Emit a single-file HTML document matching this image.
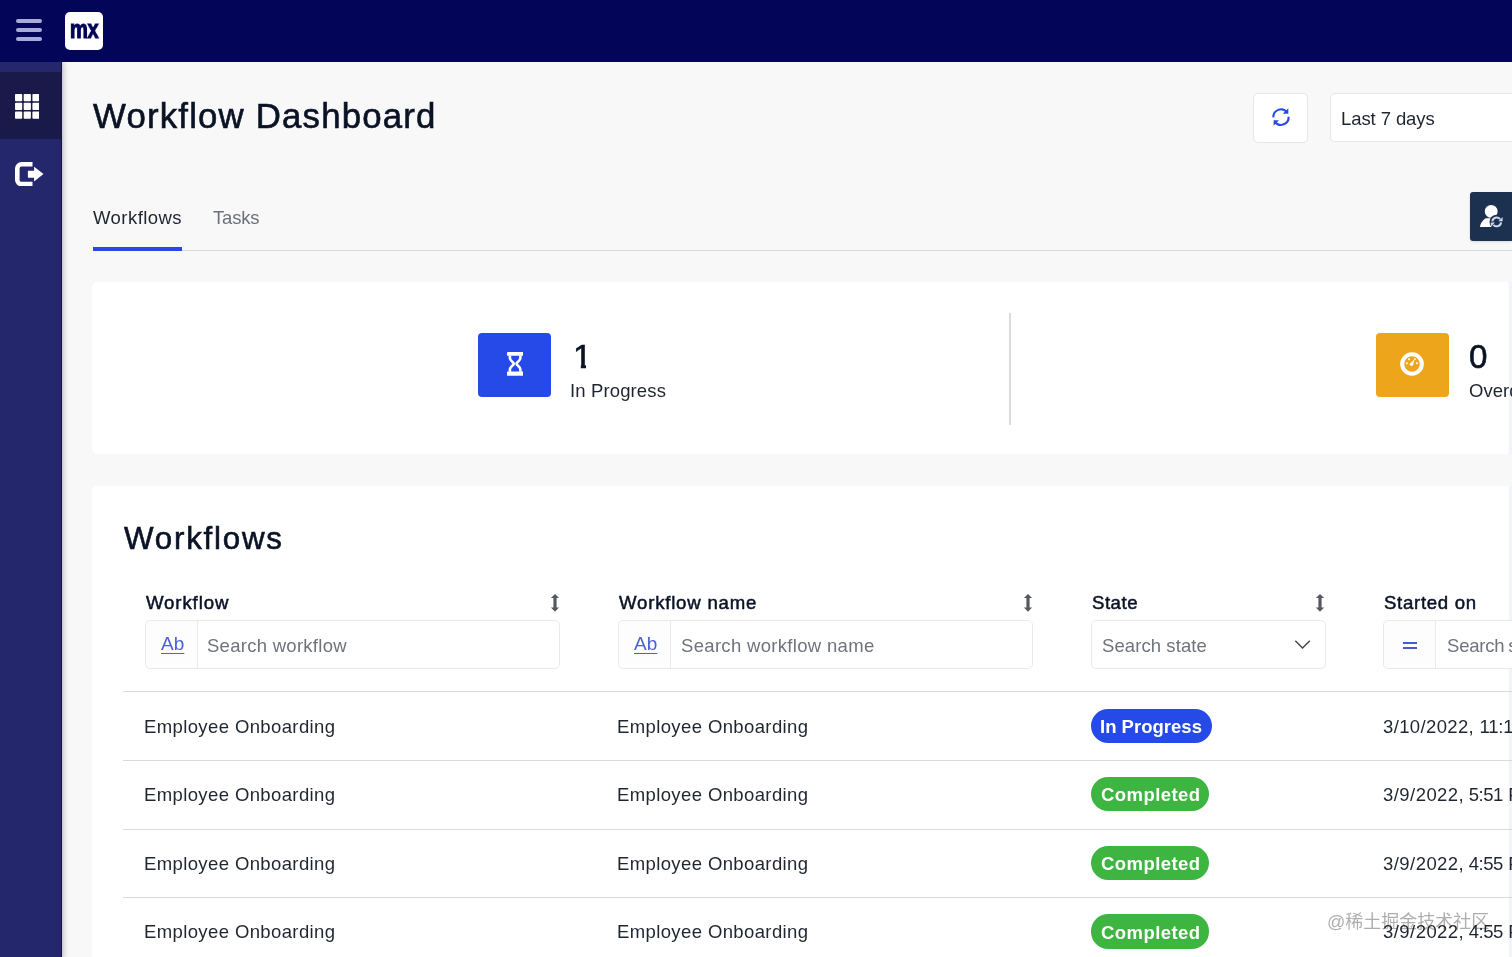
<!DOCTYPE html>
<html lang="en">
<head>
<meta charset="utf-8">
<title>Workflow Dashboard</title>
<style>
*{box-sizing:border-box;margin:0;padding:0}
html,body{width:1512px;height:957px;overflow:hidden;background:#f8f8f8;font-family:"Liberation Sans","Noto Sans CJK SC",sans-serif;color:#0a1325}
body{position:relative}
.t{position:absolute;white-space:nowrap;line-height:1;will-change:transform}
#topbar{position:absolute;left:0;top:0;width:1512px;height:61.8px;background:#030559;z-index:2}
#side{position:absolute;left:0;top:61.8px;width:61.5px;height:896px;background:#24276c;box-shadow:1px 0 6px rgba(0,0,0,.3);border-right:.9px solid #14143f}
#side .active{position:absolute;left:0;top:10.5px;width:60.6px;height:66.9px;background:#19194a}
.bar{position:absolute;left:16.1px;width:26px;height:4.2px;border-radius:2.1px;background:#a8aad8}
#logo{position:absolute;left:65px;top:12px;width:38px;height:38px;border-radius:5px;background:#fff}
#logo span{will-change:transform;position:absolute;left:-6.5px;top:0;width:50px;text-align:center;font-weight:bold;color:#030559;font-size:26.6px;line-height:34px;letter-spacing:-.6px;transform:scaleX(.76);-webkit-text-stroke:1.1px #030559}
h1{left:93px;top:94px;font-size:34.8px;font-weight:normal;letter-spacing:1.35px;color:#0a1325;-webkit-text-stroke:.6px #0a1325}
.btn{position:absolute;background:#fff;border:1px solid #e7e7e9;border-radius:5px}
#tabline{position:absolute;left:93px;top:249.8px;width:1419px;height:1.2px;background:#d9d9da}
#tabsel{position:absolute;left:93px;top:247px;width:88.5px;height:4px;background:#264ae8}
.tab{font-size:18.5px;letter-spacing:.45px}
#fab{position:absolute;left:1470px;top:192px;width:42px;height:49px;background:#1c304f;border-radius:3px 0 0 3px;box-shadow:0 1px 3px rgba(0,0,0,.12)}
.card{position:absolute;left:92px;width:1425px;background:#fff;border-radius:5px}
.sq{position:absolute;top:333.3px;width:72.5px;height:63.8px;border-radius:4px}
.num{font-size:33.2px;letter-spacing:0;color:#0a1325;-webkit-text-stroke:.6px #0a1325}
.lbl{font-size:18.5px;letter-spacing:.45px;color:#1e2530}
#vdiv{position:absolute;left:1009.2px;top:313px;width:1.6px;height:112px;background:#dcdcde}
h2{left:124px;font-size:31.3px;font-weight:normal;letter-spacing:1px;-webkit-text-stroke:.6px #0a1325}
.th{font-size:18.6px;font-weight:normal;letter-spacing:.2px;color:#0a1325;-webkit-text-stroke:.5px #0a1325}
.inp{position:absolute;top:620.4px;height:49px;background:#fff;border:1px solid #e9eaed;border-radius:5px}
.inp .pre{position:absolute;left:0;top:0;bottom:0;width:52px;border-right:1px solid #e9eaec;background:#fdfdfe;border-radius:5px 0 0 5px}
.ab{font-size:19px;color:#4a60dc;text-decoration:underline;text-decoration-thickness:1px;text-underline-offset:2.5px;letter-spacing:.2px}
.ph{font-size:18.5px;color:#6f747c;letter-spacing:.5px}
.hl{position:absolute;left:123.2px;width:1388.8px;height:1.3px;background:#dadadc}
.cell{font-size:18.5px;color:#1f2630;letter-spacing:.52px}
.badge{position:absolute;left:1090.5px;height:34.3px;border-radius:17.2px;color:#fff;font-weight:bold;font-size:18.5px}
.badge span{will-change:transform;position:absolute;left:11px;top:8px;line-height:1;white-space:nowrap;letter-spacing:.05px}
.c1{left:144px;letter-spacing:.386px}.c2{left:617.4px;letter-spacing:.386px}.cd0{left:1382.78px;letter-spacing:.367px}.cd{left:1382.78px;letter-spacing:.447px}
.sort{position:absolute;top:593.6px;width:10px;height:18px}
.tm{margin-left:-.2px;letter-spacing:-.45px}.ap{margin-left:-.3px}
.wm{font-size:18px;color:rgba(120,120,120,.6);letter-spacing:0}
</style>
</head>
<body>
<div id="topbar">
  <div class="bar" style="top:19px"></div>
  <div class="bar" style="top:28.2px"></div>
  <div class="bar" style="top:37.2px"></div>
  <div id="logo"><span id="mx">mx</span></div>
</div>
<div id="side"><div class="active"></div>
<svg style="position:absolute;left:14.6px;top:32.7px" width="24.6" height="24.8" viewBox="0 0 24.6 24.8"><g fill="#fff">
<rect x="0" y="0" width="7.2" height="7.2" rx=".8"/><rect x="8.7" y="0" width="7.2" height="7.2" rx=".8"/><rect x="17.4" y="0" width="7.2" height="7.2" rx=".8"/>
<rect x="0" y="8.8" width="7.2" height="7.2" rx=".8"/><rect x="8.7" y="8.8" width="7.2" height="7.2" rx=".8"/><rect x="17.4" y="8.8" width="7.2" height="7.2" rx=".8"/>
<rect x="0" y="17.6" width="7.2" height="7.2" rx=".8"/><rect x="8.7" y="17.6" width="7.2" height="7.2" rx=".8"/><rect x="17.4" y="17.6" width="7.2" height="7.2" rx=".8"/></g></svg>
<svg style="position:absolute;left:14.6px;top:99.8px" width="29" height="24.4" viewBox="0 0 29 24.4">
<path d="M17.5 2.3H6.5a4.2 4.2 0 0 0-4.2 4.2v11.4a4.2 4.2 0 0 0 4.2 4.2H17.5" fill="none" stroke="#fff" stroke-width="4.6"/>
<path d="M12.9 8.7h6.2v-3.9l9.4 7.3-9.4 7.3v-3.7h-6.2z" fill="#fff"/></svg>
</div>

<h1 class="t" id="h1" style="left:93.27px;top:98.50px;letter-spacing:1.185px">Workflow Dashboard</h1>

<div class="btn" style="left:1252.5px;top:93px;width:55.5px;height:49.5px"></div>
<div class="btn" style="left:1329.5px;top:93px;width:200px;height:48.7px"></div>
<div id="last7" class="t lbl" style="left:1340.87px;top:109.80px;letter-spacing:-0.092px;color:#1e2530">Last 7 days</div>

<div id="tab1" class="t tab" style="left:92.98px;top:209.25px;letter-spacing:0.455px;color:#1e2530">Workflows</div>
<div id="tab2" class="t tab" style="left:212.51px;top:209.25px;letter-spacing:-0.168px;color:#6c717e">Tasks</div>
<div id="tabline"></div><div id="tabsel"></div>
<div id="fab"></div>

<div class="card" style="top:282px;height:172.3px"></div>
<div style="position:absolute;left:1507.5px;top:282px;width:4.5px;height:172.3px;background:linear-gradient(to right,#fff,#f3f4f7 40%)"></div>
<div class="sq" style="left:478.2px;background:#264ae8"></div>
<div id="n1" class="t num" style="left:572.6px;top:338.6px;letter-spacing:0;font-size:34px;clip-path:polygon(0 0,100% 0,100% 25.5px,13px 25.5px,13px 100%,7.8px 100%,7.8px 25.5px,0 25.5px)">1</div>
<div id="l1" class="t lbl" style="left:570.49px;top:381.90px;letter-spacing:0.128px">In Progress</div>
<div id="vdiv"></div>
<div class="sq" style="left:1376px;background:#eda61c"></div>
<div id="n0" class="t num" style="left:1468.6px;top:339.5px;letter-spacing:0.000px">0</div>
<div class="t lbl" style="left:1468.5px;top:381.9px;letter-spacing:.04px">Overdue</div>

<div class="card" style="top:485.6px;height:500px"></div>
<div style="position:absolute;left:1507.5px;top:485.6px;width:4.5px;height:472px;background:linear-gradient(to right,#fff,#f3f4f7 40%)"></div>
<h2 id="h2" class="t" style="left:124.20px;top:523.00px;letter-spacing:1.777px">Workflows</h2>

<div id="th1" class="t th" style="left:145.88px;top:594.00px;letter-spacing:0.886px">Workflow</div>
<div id="th2" class="t th" style="left:619.07px;top:594.00px;letter-spacing:0.793px">Workflow name</div>
<div id="th3" class="t th" style="left:1091.69px;top:594.00px;letter-spacing:0.521px">State</div>
<div id="th4" class="t th" style="left:1383.69px;top:594.00px;letter-spacing:0.696px">Started on</div>

<div class="inp" style="left:144.7px;width:415.3px"><div class="pre"></div></div>
<div class="inp" style="left:617.8px;width:415.3px"><div class="pre"></div></div>
<div class="inp" style="left:1090.9px;width:234.7px"></div>
<div class="inp" style="left:1383.3px;width:200px"><div class="pre"></div></div>
<div id="ab1" class="t ab" style="left:161.00px;top:634.00px;letter-spacing:0.029px">Ab</div>
<div class="t ab" style="left:634.2px;top:634px;letter-spacing:.029px">Ab</div>
<div id="ph1" class="t ph" style="left:207.45px;top:637px;letter-spacing:0.275px">Search workflow</div>
<div id="ph2" class="t ph" style="left:680.94px;top:637px;letter-spacing:0.321px">Search workflow name</div>
<div id="ph3" class="t ph" style="left:1101.72px;top:637px;letter-spacing:0.081px">Search state</div>
<div class="t ph" style="left:1446.6px;top:637px;letter-spacing:-.2px;word-spacing:-1px">Search started on</div>

<div class="hl" style="top:691px"></div>
<div id="c1" class="t cell c1" style="top:718.2px">Employee Onboarding</div>
<div id="c2" class="t cell c2" style="top:718.2px">Employee Onboarding</div>
<div id="d1" class="t cell cd0" style="top:718.2px"><span id="d1s">3/10/2022,</span><span class="tm" style="margin-left:.3px;letter-spacing:-.15px"> 11:15</span><span class="ap"> AM</span></div>
<div class="badge" style="top:709px;width:121.3px;background:#264ae8"><span id="b1" style="left:9.6px;top:9.4px;letter-spacing:.013px">In Progress</span></div>

<div class="hl" style="top:759.7px"></div>
<div class="t cell c1" style="top:786.3px">Employee Onboarding</div>
<div class="t cell c2" style="top:786.3px">Employee Onboarding</div>
<div id="d2" class="t cell cd" style="top:786.3px"><span id="d2s">3/9/2022,</span><span class="tm"> 5:51</span><span class="ap"> PM</span></div>
<div class="badge" style="top:777.1px;width:118.6px;background:#3db540"><span id="b2" style="left:10.26px;top:9.3px;letter-spacing:.438px">Completed</span></div>

<div class="hl" style="top:828.8px"></div>
<div class="t cell c1" style="top:855.2px">Employee Onboarding</div>
<div class="t cell c2" style="top:855.2px">Employee Onboarding</div>
<div class="t cell cd" style="top:855.2px"><span>3/9/2022,</span><span class="tm"> 4:55</span><span class="ap"> PM</span></div>
<div class="badge" style="top:845.9px;width:118.6px;background:#3db540"><span style="left:10.26px;top:9.3px;letter-spacing:.438px">Completed</span></div>

<div class="hl" style="top:896.9px"></div>
<div class="t wm" style="left:1326.5px;top:913.3px">@稀土掘金技术社区</div>
<div class="t cell c1" style="top:923.3px">Employee Onboarding</div>
<div class="t cell c2" style="top:923.3px">Employee Onboarding</div>
<div class="t cell cd" style="top:923.3px"><span>3/9/2022,</span><span class="tm"> 4:55</span><span class="ap"> PM</span></div>
<div class="badge" style="top:914.3px;width:118.6px;background:#3db540"><span style="left:10.26px;top:9.3px;letter-spacing:.438px">Completed</span></div>


<!-- refresh icon -->
<svg style="position:absolute;left:1268.8px;top:104.9px" width="24" height="24" viewBox="-12 -12 24 24">
<path d="M-7.6 .4A7.6 7.6 0 0 1 5.9 -4.8" fill="none" stroke="#264ae8" stroke-width="2.1"/>
<path d="M7.3 -8.7V-3.2H1.8z" fill="#264ae8"/>
<path d="M7.6 -.2A7.6 7.6 0 0 1 -5.9 5" fill="none" stroke="#264ae8" stroke-width="2.1"/>
<path d="M-7.4 8.85V3.3H-2.1z" fill="#264ae8"/>
</svg>
<!-- fab user icon -->
<svg style="position:absolute;left:1476px;top:200px;z-index:3" width="32" height="32" viewBox="1476 200 32 32">
<circle cx="1491.2" cy="211.4" r="6.4" fill="#fff"/>
<path d="M1479.9 226.9c.5-3 2.3-6.3 5.6-8.6h9.5l3 8.6z" fill="#fff"/>
<circle cx="1496.7" cy="221.9" r="7.2" fill="#1c304f"/>
<path d="M1492.3 221.4a4.4 4.4 0 0 1 7.7-2.4" fill="none" stroke="#cfd8f3" stroke-width="2"/>
<path d="M1501.1 222.4a4.4 4.4 0 0 1-7.7 2.4" fill="none" stroke="#cfd8f3" stroke-width="2"/>
<path d="M1502.6 217.1v4.2h-4.2z" fill="#cfd8f3"/>
<path d="M1490.8 226.7v-4.2h4.2z" fill="#cfd8f3"/>
</svg>
<!-- hourglass -->
<svg style="position:absolute;left:506.8px;top:351.9px" width="16.3" height="23.7" viewBox="0 0 16.3 23.7">
<rect x="0" y="0" width="16.3" height="3.8" rx=".4" fill="#fff"/>
<rect x="0" y="19.5" width="16.3" height="4.2" rx=".4" fill="#fff"/>
<path d="M2.9 3.5V6C2.9 9.2 6.8 9.9 6.8 11.7C6.8 13.5 2.9 14.2 2.9 17.4V19.8" fill="none" stroke="#fff" stroke-width="2.6"/>
<path d="M13.4 3.5V6C13.4 9.2 9.5 9.9 9.5 11.7C9.5 13.5 13.4 14.2 13.4 17.4V19.8" fill="none" stroke="#fff" stroke-width="2.6"/>
</svg>
<!-- gauge -->
<svg style="position:absolute;left:1398.06px;top:349.7px" width="28" height="28" viewBox="-14 -14 28 28">
<circle cx="0" cy="0" r="9.8" fill="none" stroke="#fff" stroke-width="4.05"/>
<circle cx="-3" cy="-4.7" r="1.05" fill="#fff"/><circle cx="-5.1" cy="-.75" r="1.05" fill="#fff"/><circle cx="4.9" cy="-.75" r="1.05" fill="#fff"/>
<circle cx="-.5" cy=".2" r="1.75" fill="#fff"/>
<path d="M-1.6 -.6L3.2 -5.4L.6 1z" fill="#fff"/>
<circle cx="3" cy="-4.9" r=".9" fill="#fff"/>
</svg>
<!-- sort icons -->
<svg class="sort" style="left:549.9px"><path d="M5 0L9.1 4.1H6.6V13.55H9.1L5 17.8L.9 13.55H3.4V4.1H.9z" fill="#565a5f"/></svg>
<svg class="sort" style="left:1023.2px"><path d="M5 0L9.1 4.1H6.6V13.55H9.1L5 17.8L.9 13.55H3.4V4.1H.9z" fill="#565a5f"/></svg>
<svg class="sort" style="left:1315.3px"><path d="M5 0L9.1 4.1H6.6V13.55H9.1L5 17.8L.9 13.55H3.4V4.1H.9z" fill="#565a5f"/></svg>
<!-- chevron -->
<svg style="position:absolute;left:1293px;top:638px" width="20" height="13" viewBox="1293 638 20 13"><path d="M1295.3 640.7L1302.5 648L1309.8 640.7" fill="none" stroke="#444" stroke-width="1.4"/></svg>
<!-- equals -->
<div style="position:absolute;left:1403.1px;top:641.9px;width:13.7px;height:2px;background:#4659d0"></div>
<div style="position:absolute;left:1403.1px;top:647px;width:13.7px;height:2px;background:#4659d0"></div>
<!-- right edge -->
</body>
</html>
